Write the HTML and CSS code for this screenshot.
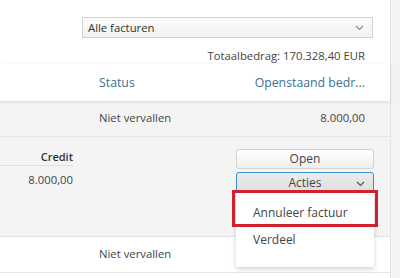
FILE: index.html
```html
<!DOCTYPE html>
<html lang="nl">
<head>
    <meta charset="UTF-8">
    <meta name="viewport" content="width=device-width, initial-scale=1.0">
    <title>Facturen</title>
    <link rel="stylesheet" href="styles.css">
</head>
<body>
    <div class="page">
        <div class="panel">
            <div class="toolbar">
                <div class="select">
                    <span>Alle facturen</span>
                    <svg class="chevron" width="9" height="6" viewBox="0 0 9 6"><path d="M1 1l3.5 3.5L8 1" fill="none" stroke="#888" stroke-width="1.1"/></svg>
                </div>
                <div class="total">Totaalbedrag: 170.328,40 EUR</div>
            </div>

            <div class="table-head">
                <span class="col-status">Status</span>
                <span class="col-amount">Openstaand bedr...</span>
            </div>

            <div class="row row-open">
                <span class="col-status">Niet vervallen</span>
                <span class="col-amount">8.000,00</span>
            </div>

            <div class="row-detail">
                <div class="credit">
                    <div class="credit-label">Credit</div>
                    <div class="credit-value">8.000,00</div>
                </div>
                <div class="actions">
                    <button class="btn">Open</button>
                    <button class="btn btn-focus">
                        Acties
                        <svg class="chevron" width="9" height="6" viewBox="0 0 9 6"><path d="M1 1l3.5 3.5L8 1" fill="none" stroke="#555" stroke-width="1.2"/></svg>
                    </button>
                    <div class="menu">
                        <div class="menu-item marked">Annuleer factuur</div>
                        <div class="menu-item">Verdeel</div>
                    </div>
                </div>
            </div>

            <div class="row">
                <span class="col-status">Niet vervallen</span>
                <span class="col-amount"></span>
            </div>
        </div>
        <div class="strip"></div>
    </div>
</body>
</html>
```

FILE: styles.css
```css
body {
    margin: 0;
    font-family: "Open Sans", Arial, sans-serif;
    font-size: 11.3px;
    line-height: 16px;
    color: #444;
    background: #fff;
}

.page {
    display: flex;
    height: 278px;
    overflow: hidden;
}

.panel {
    width: 390px;
    border-right: 1px solid #e4e4e4;
    background: #fff;
}

.strip {
    flex: 1;
    background: #f3f3f3;
}

/* bovenste balk */
.toolbar {
    padding: 17px 17px 0 82px;
}

.select {
    height: 19px;
    border: 1px solid #d2d2d2;
    background: linear-gradient(#fbfbfb, #f1f1f1);
    display: flex;
    align-items: center;
    justify-content: space-between;
    padding: 0 8px 0 5px;
    color: #333;
}

.total {
    margin-top: 10px;
    padding-right: 8px;
    text-align: right;
}

.table-head {
    display: flex;
    justify-content: space-between;
    padding: 11px 25px 10px 99px;
    font-size: 12.3px;
    color: #3b6f95;
    background: #fff;
    position: relative;
    z-index: 1;
    box-shadow: 0 1px 3px rgba(0,0,0,0.12);
}

.row {
    display: flex;
    justify-content: space-between;
    padding: 9px 25px 10px 99px;
    border-bottom: 1px solid #e6e6e6;
}

.row-open {
    background: #f4f4f4;
}

/* uitgeklapte rij */
.row-detail {
    height: 100px;
    box-sizing: border-box;
    background: #f4f4f4;
    border-bottom: 1px solid #e3e3e3;
    display: flex;
    justify-content: space-between;
    padding: 12px 16px 0 0;
}

.credit {
    width: 73px;
    text-align: right;
}

.credit-label {
    font-size: 11px;
    font-weight: 600;
    color: #333;
    border-bottom: 1px solid #e0e0e0;
}

.credit-value {
    margin-top: 6px;
}

.actions {
    width: 138px;
    display: flex;
    flex-direction: column;
    gap: 3px;
    position: relative;
}

.btn {
    font-family: inherit;
    font-size: 12px;
    line-height: 16px;
    height: 20px;
    padding: 0;
    color: #444;
    border: 1px solid #d3d3d3;
    border-radius: 3px;
    background: linear-gradient(#ffffff, #efefef);
    position: relative;
}

.btn-focus {
    height: 21px;
    border-color: #3b8fc2;
    background: linear-gradient(#ececec, #dedede);
}

.btn-focus .chevron {
    position: absolute;
    right: 8px;
    top: 8px;
}

.menu {
    position: absolute;
    top: 44px;
    left: 0;
    right: 0;
    background: #fff;
    box-shadow: 0 2px 5px rgba(0,0,0,0.18);
    padding-bottom: 14px;
}

.menu-item {
    padding: 8px 17px 5px;
    color: #444;
    font-size: 12px;
}

.menu-item.marked {
    padding: 12px 17px 3px 18px;
    margin: 0 -1px;
    outline: 3px solid #d2202f;
}
```
